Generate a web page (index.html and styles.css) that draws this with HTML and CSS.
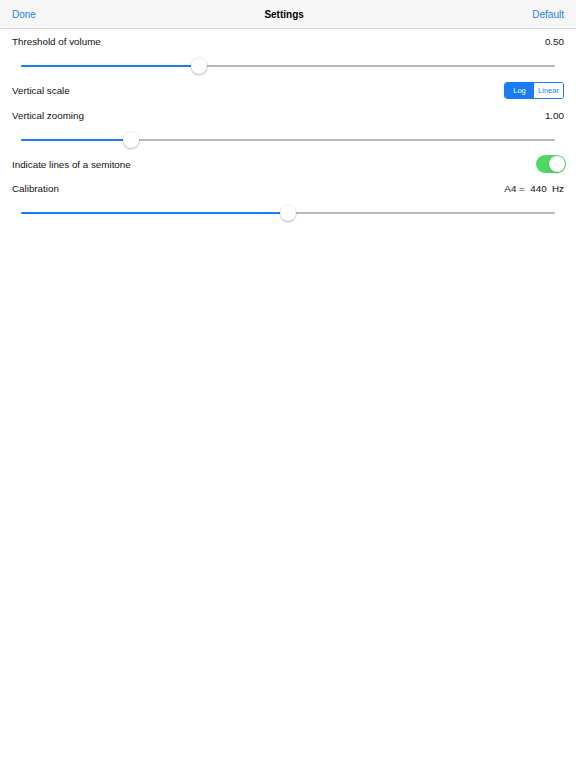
FILE: index.html
```html
<!DOCTYPE html>
<html>
<head>
<meta charset="utf-8">
<link rel="stylesheet" href="styles.css">
</head>
<body>
<header class="nav">
  <span class="nav-btn">Done</span>
  <span class="nav-title">Settings</span>
  <span class="nav-btn">Default</span>
</header>
<main class="list">
  <div class="row"><span class="label">Threshold of volume</span><span class="value">0.50</span></div>
  <div class="row slider-row"><div class="slider"><div class="fill" style="width:33.3%"></div><div class="thumb" style="left:33.3%"></div></div></div>
  <div class="row"><span class="label">Vertical scale</span>
    <div class="segmented"><span class="seg active">Log</span><span class="seg">Linear</span></div>
  </div>
  <div class="row"><span class="label">Vertical zooming</span><span class="value">1.00</span></div>
  <div class="row slider-row"><div class="slider"><div class="fill" style="width:20.6%"></div><div class="thumb" style="left:20.6%"></div></div></div>
  <div class="row"><span class="label">Indicate lines of a semitone</span><div class="toggle"><div class="knob"></div></div></div>
  <div class="row"><span class="label">Calibration</span><span class="value">A4 =&nbsp; 440&nbsp; Hz</span></div>
  <div class="row slider-row"><div class="slider"><div class="fill" style="width:50%"></div><div class="thumb" style="left:50%"></div></div></div>
</main>
</body>
</html>
```
FILE: styles.css
```css
html, body {
  margin: 0;
  padding: 0;
  background: #ffffff;
  font-family: "Liberation Sans", Arial, sans-serif;
  color: #111;
}
.nav {
  height: 28px;
  background: #f7f7f7;
  border-bottom: 1px solid #d6d6d6;
  display: flex;
  align-items: center;
  justify-content: space-between;
  padding: 0 12px;
  font-size: 10px;
}
.nav-btn {
  color: #1a7cf5;
}
.nav-title {
  font-weight: bold;
  color: #000;
}
.list {
  display: flex;
  flex-direction: column;
}
.row {
  height: 24.6px;
  display: flex;
  align-items: center;
  justify-content: space-between;
  padding: 0 12px;
  font-size: 9.8px;
}
.slider-row {
  padding: 0 21px;
}
.slider {
  position: relative;
  flex: 1;
  height: 2px;
  background: #b8b8b8;
  border-radius: 1px;
}
.fill {
  height: 2px;
  background: #1a7cf5;
  border-radius: 1px;
}
.thumb {
  position: absolute;
  top: 50%;
  width: 16px;
  height: 16px;
  margin: -8px 0 0 -8px;
  background: #fff;
  border-radius: 50%;
  box-shadow: 0 1px 2px rgba(0,0,0,0.28), 0 0 0 0.5px rgba(0,0,0,0.08);
}
.segmented {
  display: flex;
  border: 1px solid #1a7cf5;
  border-radius: 3px;
  overflow: hidden;
  height: 15px;
  font-size: 7.5px;
}
.seg {
  width: 29px;
  display: flex;
  align-items: center;
  justify-content: center;
  color: #1a7cf5;
  background: #fff;
}
.seg.active {
  background: #1a7cf5;
  color: #fff;
}
.toggle {
  position: relative;
  width: 30px;
  height: 18px;
  margin-right: -2px;
  border-radius: 9px;
  background: #4cd964;
}
.knob {
  position: absolute;
  right: 1px;
  top: 1px;
  width: 16px;
  height: 16px;
  border-radius: 50%;
  background: #fff;
  box-shadow: 0 1px 2px rgba(0,0,0,0.25);
}
```
